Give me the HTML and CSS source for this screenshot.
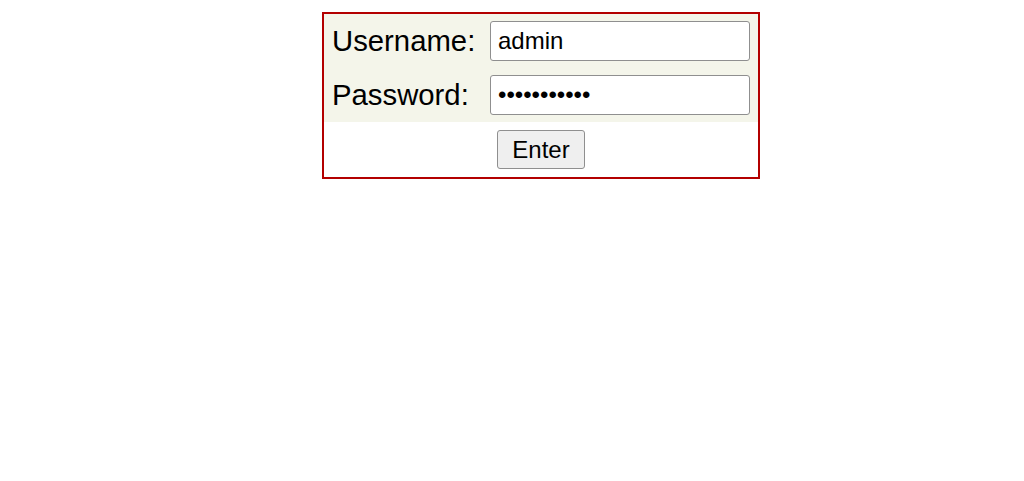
FILE: index.html
```html
<!DOCTYPE html>
<html>
<head>
<meta charset="utf-8">
<link rel="stylesheet" href="styles.css">
</head>
<body>
<form class="login">
  <div class="fields">
    <div class="row">
      <label class="label" for="u">Username:</label>
      <input class="field" id="u" type="text" value="admin">
    </div>
    <div class="row">
      <label class="label" for="p">Password:</label>
      <input class="field" id="p" type="password" value="adminadmin1">
    </div>
  </div>
  <div class="actions">
    <button class="btn" type="button">Enter</button>
  </div>
</form>
</body>
</html>
```

FILE: styles.css
```css
html, body {
  margin: 0;
  padding: 0;
  background: #fff;
}
body {
  font-family: "Liberation Sans", Arial, sans-serif;
  padding-top: 12px;
  padding-left: 322px;
}
.login {
  width: 434px;
  border: 2px solid #b30000;
  margin: 0;
}
.fields {
  background: #f4f5ea;
}
.row {
  display: flex;
  align-items: center;
  padding: 7px 8px;
  height: 40px;
}
.label {
  width: 158px;
  font-size: 29.3px;
  color: #000;
}
.field {
  box-sizing: border-box;
  width: 260px;
  height: 40px;
  margin: 0;
  padding: 0 7px;
  border: 1px solid #8f8f8f;
  border-radius: 3px;
  background: #fff;
  font-family: "Liberation Sans", Arial, sans-serif;
  font-size: 24px;
  color: #000;
  outline: none;
}
.actions {
  display: flex;
  justify-content: center;
  padding: 8px 0;
  height: 39px;
}
.btn {
  box-sizing: border-box;
  height: 39px;
  width: 88px;
  margin: 0;
  padding: 0;
  border: 1px solid #8f8f8f;
  border-radius: 3px;
  background: #efefef;
  font-family: "Liberation Sans", Arial, sans-serif;
  font-size: 24px;
  color: #000;
}
```
